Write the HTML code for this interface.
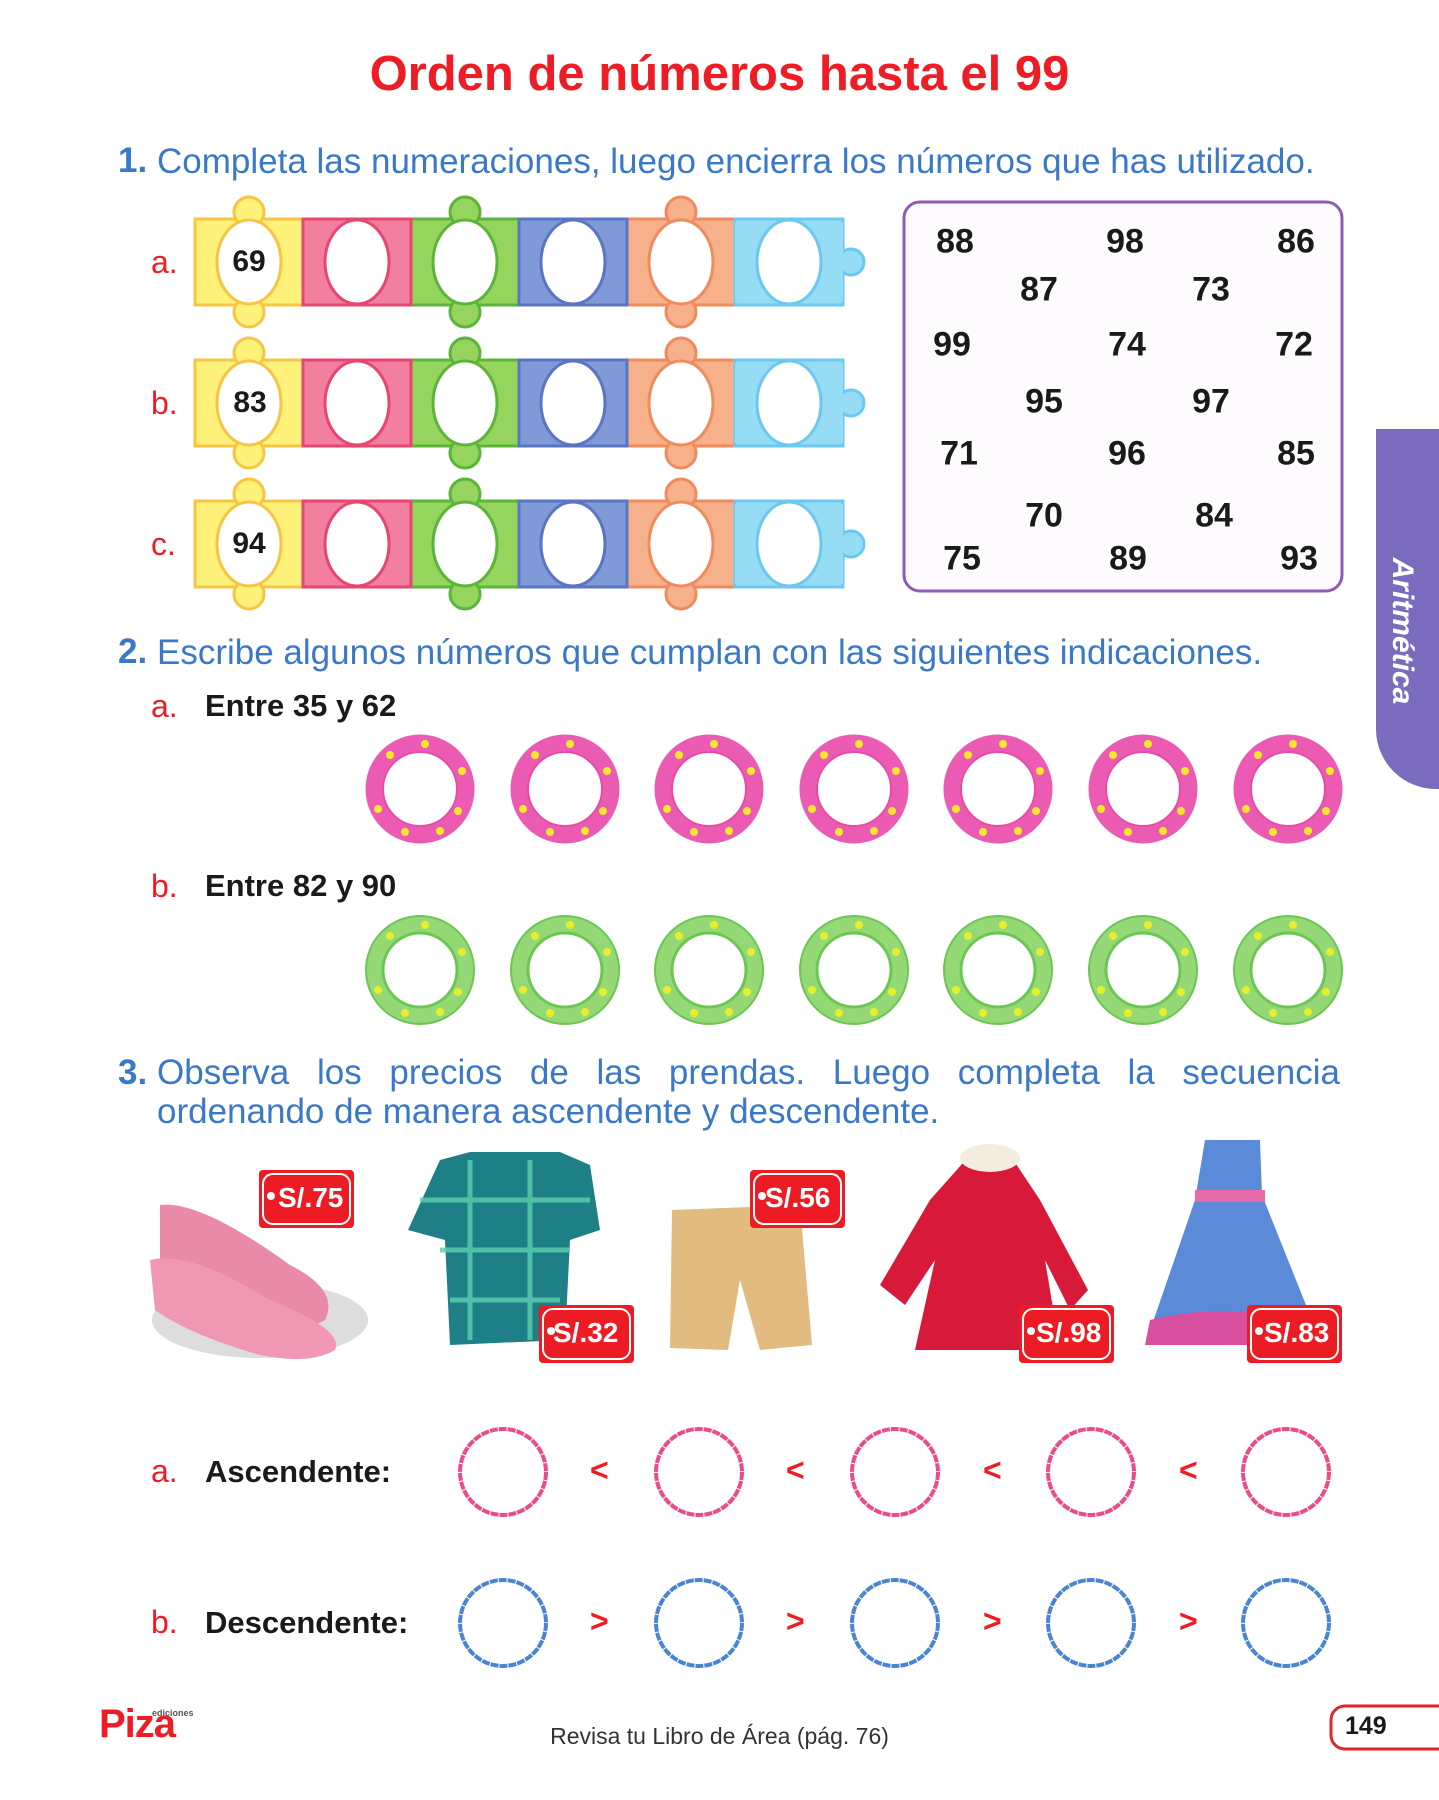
<!DOCTYPE html>
<html><head><meta charset="utf-8"><style>
body{margin:0;background:#fff;}
#p{position:relative;width:1439px;height:1800px;overflow:hidden;background:#fff;font-family:"Liberation Sans",sans-serif;}
.a{position:absolute;white-space:nowrap;}
.t{color:#ee1c24;font-weight:bold;font-size:49px;left:0;width:1439px;text-align:center;top:46px;}
.q{color:#3a78c8;font-size:35px;}
.qn{color:#3a78c8;font-weight:bold;font-size:35px;}
.lab{color:#ee1c24;font-size:32px;}
.bk{color:#1a1a1a;font-weight:bold;font-size:31px;}
.n{font-weight:bold;font-size:34px;color:#1a1a1a;transform:translate(-50%,-50%);}
.tg{color:#fff;font-weight:bold;font-size:28px;}
</style></head><body><div id="p">
<div class="a t">Orden de números hasta el 99</div>

<div class="a qn" style="left:118px;top:141px">1.</div>
<div class="a q" style="left:157px;top:142px">Completa las numeraciones, luego encierra los números que has utilizado.</div>

<svg class="a" style="left:0;top:0" width="1439" height="1800">
<defs>
<g id="row">
 <g stroke-width="3">
 <rect x="0" y="-43" width="108" height="86" fill="#fff27a" stroke="#f7c444"/>
 <circle cx="54" cy="-50" r="15" fill="#fff27a" stroke="#f7c444"/><circle cx="54" cy="50" r="15" fill="#fff27a" stroke="#f7c444"/>
 <rect x="216" y="-43" width="108" height="86" fill="#95d55e" stroke="#5bb53a"/>
 <circle cx="270" cy="-50" r="15" fill="#95d55e" stroke="#5bb53a"/><circle cx="270" cy="50" r="15" fill="#95d55e" stroke="#5bb53a"/>
 <rect x="432" y="-43" width="108" height="86" fill="#f6b08a" stroke="#ef8b5e"/>
 <circle cx="486" cy="-50" r="15" fill="#f6b08a" stroke="#ef8b5e"/><circle cx="486" cy="50" r="15" fill="#f6b08a" stroke="#ef8b5e"/>
 <rect x="108" y="-43" width="108" height="86" fill="#f27fa0" stroke="#e8456f"/>
 <rect x="324" y="-43" width="108" height="86" fill="#7f9ad6" stroke="#5a75c3"/>
 <rect x="540" y="-43" width="108" height="86" fill="#96dcf5" stroke="#6cc8ee"/>
 <circle cx="656" cy="0" r="13" fill="#96dcf5" stroke="#6cc8ee"/>
 <rect x="540" y="-40" width="108" height="80" fill="#96dcf5"/>
 </g>
 <g fill="#fff" stroke-width="3">
 <ellipse cx="54" cy="0" rx="32" ry="42" stroke="#f7c444"/>
 <ellipse cx="162" cy="0" rx="32" ry="42" stroke="#e8456f"/>
 <ellipse cx="270" cy="0" rx="32" ry="42" stroke="#5bb53a"/>
 <ellipse cx="378" cy="0" rx="32" ry="42" stroke="#5a75c3"/>
 <ellipse cx="486" cy="0" rx="32" ry="42" stroke="#ef8b5e"/>
 <ellipse cx="594" cy="0" rx="32" ry="42" stroke="#6cc8ee"/>
 </g>
</g>
<g id="pr">
 <circle r="45.5" fill="none" stroke="#ec5bb3" stroke-width="18"/>
 <circle r="37" fill="none" stroke="#e94aa8" stroke-width="2"/>
 <g fill="#f5e82a"><circle cx="-30" cy="-34" r="4"/><circle cx="5" cy="-45" r="4"/><circle cx="42" cy="-18" r="4"/><circle cx="38" cy="22" r="4"/><circle cx="20" cy="42" r="4"/><circle cx="-15" cy="43" r="4"/><circle cx="-42" cy="20" r="4"/></g>
</g>
<g id="gr">
 <circle r="45.5" fill="none" stroke="#94d975" stroke-width="18"/>
 <circle r="54" fill="none" stroke="#6cc653" stroke-width="2"/>
 <circle r="37" fill="none" stroke="#6cc653" stroke-width="3"/>
 <g fill="#e8ef2a"><circle cx="-30" cy="-34" r="4"/><circle cx="5" cy="-45" r="4"/><circle cx="42" cy="-18" r="4"/><circle cx="38" cy="22" r="4"/><circle cx="20" cy="42" r="4"/><circle cx="-15" cy="43" r="4"/><circle cx="-42" cy="20" r="4"/></g>
</g>
<g id="tag">
 <rect x="0" y="0" width="95" height="58" rx="4" fill="#ed1c24"/>
 <rect x="4" y="4" width="87" height="50" rx="10" fill="none" stroke="#fff" stroke-width="2"/>
 <circle cx="12" cy="26" r="4" fill="#fff"/>
</g>
</defs>
<use href="#row" transform="translate(195,262)"/>
<use href="#row" transform="translate(195,403)"/>
<use href="#row" transform="translate(195,544)"/>

<rect x="904" y="202" width="438" height="389" rx="16" fill="#fdfbfd" stroke="#8e5bb5" stroke-width="3"/>
<path d="M1439 429 H1376 V730 A60 60 0 0 0 1436 789 H1439Z" fill="#7b6bbf"/>

<g>
<use href="#pr" x="420" y="789"/><use href="#pr" x="565" y="789"/><use href="#pr" x="709" y="789"/><use href="#pr" x="854" y="789"/><use href="#pr" x="998" y="789"/><use href="#pr" x="1143" y="789"/><use href="#pr" x="1288" y="789"/>
<use href="#gr" x="420" y="970"/><use href="#gr" x="565" y="970"/><use href="#gr" x="709" y="970"/><use href="#gr" x="854" y="970"/><use href="#gr" x="998" y="970"/><use href="#gr" x="1143" y="970"/><use href="#gr" x="1288" y="970"/>
</g>

<ellipse cx="260" cy="1320" rx="108" ry="38" fill="#ddd"/>
<path d="M160 1205 Q200 1200 290 1265 Q340 1290 325 1320 Q300 1335 250 1320 Q190 1290 160 1260Z" fill="#e88aa8"/>
<path d="M150 1260 Q190 1250 270 1300 Q345 1330 335 1350 Q310 1365 260 1355 Q190 1335 155 1310Z" fill="#ef97b3"/>
<path d="M440 1160 L470 1152 L560 1152 L590 1165 L600 1230 L570 1240 L565 1340 L450 1345 L445 1240 L408 1230Z" fill="#1f7f86"/>
<g stroke="#5cd0b0" stroke-width="5" opacity=".8"><line x1="420" y1="1200" x2="590" y2="1200"/><line x1="440" y1="1250" x2="570" y2="1250"/><line x1="450" y1="1300" x2="560" y2="1300"/><line x1="470" y1="1160" x2="470" y2="1340"/><line x1="530" y1="1160" x2="530" y2="1340"/></g>
<path d="M672 1210 L800 1205 L812 1345 L760 1350 L740 1280 L728 1350 L670 1348Z" fill="#e2bb80"/>
<path d="M970 1155 Q990 1140 1010 1155 L1040 1200 L1088 1290 L1070 1310 L1045 1260 L1060 1350 L915 1350 L935 1260 L905 1305 L880 1285 L930 1200Z" fill="#d7193a"/>
<ellipse cx="990" cy="1158" rx="30" ry="14" fill="#f5ece0"/>
<path d="M1205 1140 L1260 1140 L1262 1195 L1320 1340 L1145 1345 L1195 1200Z" fill="#5b8ad8"/>
<rect x="1195" y="1190" width="70" height="12" fill="#e96aa8"/>
<path d="M1150 1320 Q1230 1300 1318 1325 L1320 1345 L1145 1345Z" fill="#d84fa0"/>

<use href="#tag" x="259" y="1170"/>
<use href="#tag" x="539" y="1305"/>
<use href="#tag" x="750" y="1170"/>
<use href="#tag" x="1019" y="1305"/>
<use href="#tag" x="1247" y="1305"/>

<g fill="none" stroke="#ea4c89" stroke-width="4" stroke-dasharray="8 1">
<circle cx="503" cy="1472" r="43"/><circle cx="699" cy="1472" r="43"/><circle cx="895" cy="1472" r="43"/><circle cx="1091" cy="1472" r="43"/><circle cx="1286" cy="1472" r="43"/>
</g>
<g fill="none" stroke="#4a86d0" stroke-width="4" stroke-dasharray="8 1">
<circle cx="503" cy="1623" r="43"/><circle cx="699" cy="1623" r="43"/><circle cx="895" cy="1623" r="43"/><circle cx="1091" cy="1623" r="43"/><circle cx="1286" cy="1623" r="43"/>
</g>
<path d="M1439 1706 H1345 A14 14 0 0 0 1331 1720 V1735 A14 14 0 0 0 1345 1749 H1439" fill="#fff" stroke="#e0262b" stroke-width="3"/>
</svg>

<div class="a lab" style="left:151px;top:244px">a.</div>
<div class="a lab" style="left:151px;top:385px">b.</div>
<div class="a lab" style="left:151px;top:526px">c.</div>
<div class="a n" style="left:249px;top:262px;font-size:30px">69</div>
<div class="a n" style="left:250px;top:403px;font-size:30px">83</div>
<div class="a n" style="left:249px;top:544px;font-size:30px">94</div>

<div class="a n" style="left:955px;top:242px">88</div><div class="a n" style="left:1125px;top:242px">98</div><div class="a n" style="left:1296px;top:242px">86</div>
<div class="a n" style="left:1039px;top:290px">87</div><div class="a n" style="left:1211px;top:290px">73</div>
<div class="a n" style="left:952px;top:345px">99</div><div class="a n" style="left:1127px;top:345px">74</div><div class="a n" style="left:1294px;top:345px">72</div>
<div class="a n" style="left:1044px;top:402px">95</div><div class="a n" style="left:1211px;top:402px">97</div>
<div class="a n" style="left:959px;top:454px">71</div><div class="a n" style="left:1127px;top:454px">96</div><div class="a n" style="left:1296px;top:454px">85</div>
<div class="a n" style="left:1044px;top:516px">70</div><div class="a n" style="left:1214px;top:516px">84</div>
<div class="a n" style="left:962px;top:559px">75</div><div class="a n" style="left:1128px;top:559px">89</div><div class="a n" style="left:1299px;top:559px">93</div>

<div class="a" style="left:1402px;top:631px;transform:translate(-50%,-50%) rotate(90deg);color:#fff;font-weight:bold;font-style:italic;font-size:30px">Aritmética</div>

<div class="a qn" style="left:118px;top:632px">2.</div>
<div class="a q" style="left:157px;top:633px">Escribe algunos números que cumplan con las siguientes indicaciones.</div>
<div class="a lab" style="left:151px;top:688px">a.</div>
<div class="a bk" style="left:205px;top:688px">Entre 35 y 62</div>
<div class="a lab" style="left:151px;top:868px">b.</div>
<div class="a bk" style="left:205px;top:868px">Entre 82 y 90</div>

<div class="a qn" style="left:118px;top:1053px">3.</div>
<div class="a q" style="left:157px;top:1053px;width:1183px;text-align:justify;text-align-last:justify;white-space:normal">Observa los precios de las prendas. Luego completa la secuencia</div>
<div class="a q" style="left:157px;top:1092px">ordenando de manera ascendente y descendente.</div>

<div class="a tg" style="left:278px;top:1182px">S/.75</div>
<div class="a tg" style="left:553px;top:1317px">S/.32</div>
<div class="a tg" style="left:765px;top:1182px">S/.56</div>
<div class="a tg" style="left:1036px;top:1317px">S/.98</div>
<div class="a tg" style="left:1264px;top:1317px">S/.83</div>

<div class="a lab" style="left:151px;top:1453px">a.</div>
<div class="a bk" style="left:205px;top:1454px">Ascendente:</div>
<div class="a lab" style="left:151px;top:1604px">b.</div>
<div class="a bk" style="left:205px;top:1605px">Descendente:</div>
<div class="a" style="left:590px;top:1452px;color:#ee1c24;font-weight:bold;font-size:32px">&lt;</div>
<div class="a" style="left:786px;top:1452px;color:#ee1c24;font-weight:bold;font-size:32px">&lt;</div>
<div class="a" style="left:983px;top:1452px;color:#ee1c24;font-weight:bold;font-size:32px">&lt;</div>
<div class="a" style="left:1179px;top:1452px;color:#ee1c24;font-weight:bold;font-size:32px">&lt;</div>
<div class="a" style="left:590px;top:1603px;color:#ee1c24;font-weight:bold;font-size:32px">&gt;</div>
<div class="a" style="left:786px;top:1603px;color:#ee1c24;font-weight:bold;font-size:32px">&gt;</div>
<div class="a" style="left:983px;top:1603px;color:#ee1c24;font-weight:bold;font-size:32px">&gt;</div>
<div class="a" style="left:1179px;top:1603px;color:#ee1c24;font-weight:bold;font-size:32px">&gt;</div>

<div class="a" style="left:99px;top:1702px;color:#ee1c24;font-weight:bold;font-size:40px;letter-spacing:-1px">Piza</div>
<div class="a" style="left:152px;top:1708px;color:#555;font-weight:bold;font-size:9px">ediciones</div>
<div class="a" style="left:0;width:1439px;text-align:center;top:1723px;color:#333;font-size:23px">Revisa tu Libro de Área (pág. 76)</div>
<div class="a" style="left:1345px;top:1712px;color:#1a1a1a;font-weight:bold;font-size:25px">149</div>
</div></body></html>
